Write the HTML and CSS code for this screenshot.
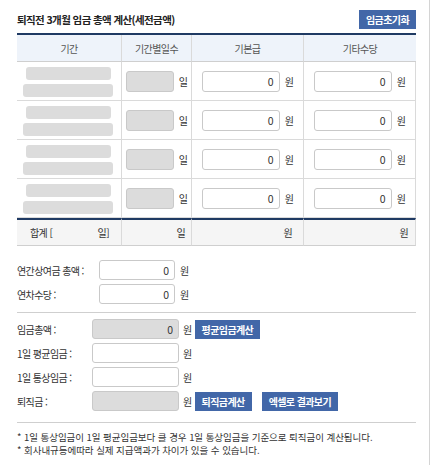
FILE: index.html
```html
<!DOCTYPE html>
<html lang="ko">
<head>
<meta charset="utf-8">
<title>퇴직금 계산</title>
<link rel="stylesheet" href="styles.css">
</head>
<body>
<div class="page">
  <div class="titlebar">
    <h2 class="title">퇴직전 3개월 임금 총액 계산(세전금액)</h2>
    <button class="btn btn-reset">임금초기화</button>
  </div>

  <div class="grid">
    <div class="th">기간</div>
    <div class="th">기간별일수</div>
    <div class="th">기본급</div>
    <div class="th th-last">기타수당</div>

    <div class="td period"><span class="bar bar-a"></span><span class="bar bar-b"></span></div>
    <div class="td"><input class="inp inp-days gray" type="text" value=""><span class="unit">일</span></div>
    <div class="td"><input class="inp inp-money" type="text" value="0"><span class="unit">원</span></div>
    <div class="td td-last"><input class="inp inp-money" type="text" value="0"><span class="unit">원</span></div>

    <div class="td period"><span class="bar bar-a"></span><span class="bar bar-b"></span></div>
    <div class="td"><input class="inp inp-days gray" type="text" value=""><span class="unit">일</span></div>
    <div class="td"><input class="inp inp-money" type="text" value="0"><span class="unit">원</span></div>
    <div class="td td-last"><input class="inp inp-money" type="text" value="0"><span class="unit">원</span></div>

    <div class="td period"><span class="bar bar-a"></span><span class="bar bar-b"></span></div>
    <div class="td"><input class="inp inp-days gray" type="text" value=""><span class="unit">일</span></div>
    <div class="td"><input class="inp inp-money" type="text" value="0"><span class="unit">원</span></div>
    <div class="td td-last"><input class="inp inp-money" type="text" value="0"><span class="unit">원</span></div>

    <div class="td period"><span class="bar bar-a"></span><span class="bar bar-b"></span></div>
    <div class="td"><input class="inp inp-days gray" type="text" value=""><span class="unit">일</span></div>
    <div class="td"><input class="inp inp-money" type="text" value="0"><span class="unit">원</span></div>
    <div class="td td-last"><input class="inp inp-money" type="text" value="0"><span class="unit">원</span></div>

    <div class="sum sum-first"><span>합계 [</span><span>일]</span></div>
    <div class="sum sum-r1">일</div>
    <div class="sum sum-r2">원</div>
    <div class="sum sum-r3 td-last">원</div>
  </div>

  <div class="group group-a">
    <div class="row">
      <label class="label label-a">연간상여금 총액 :</label>
      <input class="inp inp-a" type="text" value="0"><span class="unit">원</span>
    </div>
    <div class="row">
      <label class="label label-a">연차수당 :</label>
      <input class="inp inp-a" type="text" value="0"><span class="unit">원</span>
    </div>
  </div>

  <div class="group group-b">
    <div class="row">
      <label class="label label-b">임금총액 :</label>
      <input class="inp inp-b gray" type="text" value="0"><span class="unit unit-b">원</span>
      <button class="btn btn-row">평균임금계산</button>
    </div>
    <div class="row">
      <label class="label label-b">1일 평균임금 :</label>
      <input class="inp inp-b" type="text" value=""><span class="unit unit-b">원</span>
    </div>
    <div class="row">
      <label class="label label-b">1일 통상임금 :</label>
      <input class="inp inp-b" type="text" value=""><span class="unit unit-b">원</span>
    </div>
    <div class="row">
      <label class="label label-b">퇴직금 :</label>
      <input class="inp inp-b gray" type="text" value=""><span class="unit unit-b">원</span>
      <button class="btn btn-row">퇴직금계산</button>
      <button class="btn btn-row btn-excel">엑셀로 결과보기</button>
    </div>
  </div>

  <div class="notes">
    <p>* 1일 통상임금이 1일 평균임금보다 클 경우 1일 통상임금을 기준으로 퇴직금이 계산됩니다.</p>
    <p>* 회사내규등에따라 실제 지급액과가 차이가 있을 수 있습니다.</p>
  </div>
</div>
</body>
</html>
```

FILE: styles.css
```css
* { box-sizing: border-box; }
html, body { margin: 0; padding: 0; background: #fff; }
body {
  font-family: "Noto Sans CJK KR", "Noto Sans", sans-serif;
  font-size: 10px;
  color: #333;
  letter-spacing: -0.6px;
}
.page {
  width: 430px;
  min-height: 465px;
  border-right: 1px solid #d4d4d4;
  padding: 10px 13px 0 17px;
}
.titlebar {
  display: flex;
  justify-content: space-between;
  align-items: flex-start;
  height: 23px;
}
.title {
  margin: 3px 0 0;
  font-size: 10.5px;
  font-weight: bold;
  color: #222;
  line-height: 14px;
}
.btn {
  font-family: inherit;
  letter-spacing: -0.6px;
  border: 0;
  background: #4267a8;
  color: #fff;
  font-weight: bold;
  font-size: 10px;
  padding: 0;
  height: 19px;
  line-height: 19px;
  cursor: pointer;
}
.btn-reset { width: 57px; }

.grid {
  display: grid;
  grid-template-columns: 105px 70px 112px 112px;
  border-top: 2px solid #1f3a63;
}
.th {
  height: 27px;
  background: #eef3fa;
  border-right: 1px solid #dadada;
  border-bottom: 1px solid #cfcfcf;
  display: flex;
  align-items: center;
  justify-content: center;
  color: #555;
  font-size: 10px;
}
.th-last, .td-last { border-right: 0; }
.td {
  height: 39px;
  border-right: 1px solid #dadada;
  border-bottom: 1px solid #dadada;
  display: flex;
  align-items: center;
  justify-content: center;
  padding-top: 1px;
}
.period {
  flex-direction: column;
  align-items: flex-start;
  justify-content: flex-start;
  padding: 5px 0 0 6px;
  gap: 4px;
}
.bar {
  display: block;
  height: 13px;
  background: #dcdcdc;
  border-radius: 3px;
}
.bar-a { width: 85px; margin-left: 3px; }
.bar-b { width: 90px; }

.inp {
  font-family: inherit;
  font-size: 10.5px;
  color: #333;
  border: 1px solid #c9c9c9;
  border-radius: 3px;
  background: #fff;
  height: 21px;
  padding: 0 5px 0 0;
  text-align: right;
  outline: none;
  margin: 0;
}
.gray { background: #dcdcdc; border-color: #c9c9c9; }
.inp-days { width: 48px; }
.inp-money { width: 78px; }
.unit { margin-left: 5px; color: #333; font-size: 10px; }

.sum {
  height: 28px;
  border-top: 2px solid #1f3a63;
  border-bottom: 1px solid #cfcfcf;
  border-right: 1px solid #dadada;
  background: #f5f5f5;
  display: flex;
  align-items: center;
  justify-content: flex-end;
  color: #333;
}
.sum-first { justify-content: space-between; padding: 0 12px 0 13px; }
.sum-r1 { padding-right: 6px; }
.sum-r2 { padding-right: 11px; }
.sum-r3 { padding-right: 7px; }

.group-a { padding: 14px 0 8px; border-bottom: 1px solid #cfcfcf; }
.group-b { padding: 6px 0 11px; border-bottom: 1px solid #cfcfcf; }
.row { display: flex; align-items: center; }
.group-a .row + .row { margin-top: 4px; }
.group-b .row + .row { margin-top: 4px; }
.label { color: #333; font-size: 10px; }
.label-a { width: 82px; }
.label-b { width: 75px; }
.inp-a { width: 76px; height: 20px; }
.inp-b { width: 87px; height: 20px; }
.unit-b { margin-left: 4px; }
.btn-row { margin-left: 3px; padding: 0 7px; }
.btn-excel { margin-left: 10px; }

.notes { padding-top: 7px; }
.notes p {
  margin: 0;
  line-height: 14px;
  font-size: 9.5px;
  letter-spacing: -0.05px;
  color: #333;
}
.notes p + p { margin-top: -1px; }
```
